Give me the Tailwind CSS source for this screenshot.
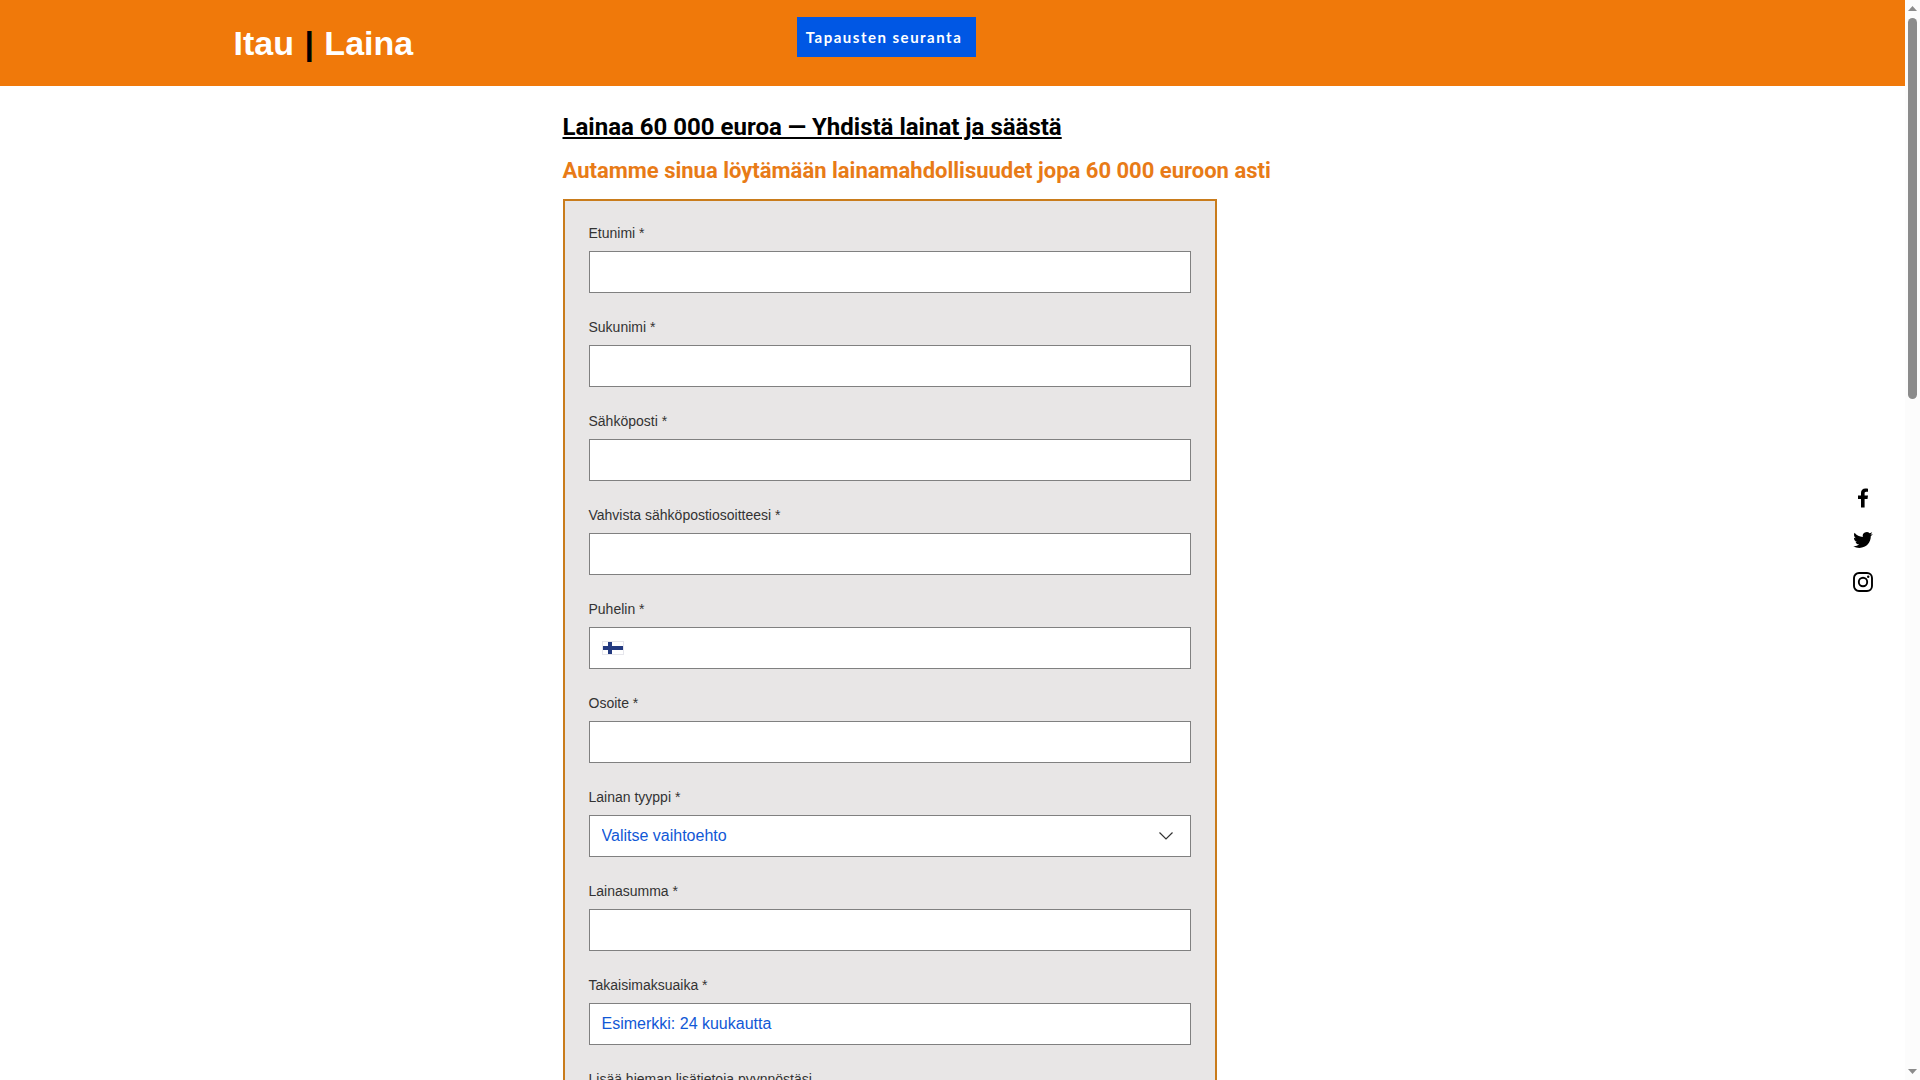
<!DOCTYPE html>
<html lang="fi">
<head>
    <meta charset="UTF-8">
    <meta name="viewport" content="width=device-width, initial-scale=1">
    <title>Itau | Laina</title>
    <script src="https://cdn.jsdelivr.net/npm/@tailwindcss/browser@4"></script>
</head>
<body class="flex h-screen overflow-hidden bg-white font-['Liberation_Sans',Arial,sans-serif]">

<div class="relative flex-1 overflow-hidden">
    <header class="h-[86px] bg-[#f0790a]">
        <div class="mx-auto flex max-w-[1440px] items-start">
            <a href="#" class="w-[564px] pt-[23px] pl-px text-[34px] leading-10 font-bold text-white">Itau <span class="mx-px text-black">|</span> Laina</a>
            <button type="button" class="mt-[17px] h-10 w-[179px] bg-[#0057e4] pr-1 font-['Lato',sans-serif] text-[15px] font-bold tracking-widest whitespace-nowrap text-white">Tapausten seuranta</button>
        </div>
    </header>

    <main class="mx-auto w-full max-w-[980px] pt-[25px] pl-[100px]">
        <h1 class="font-['Roboto',sans-serif] text-2xl leading-8 font-bold text-black underline">Lainaa 60 000 euroa — Yhdistä lainat ja säästä</h1>
        <h2 class="mt-3 font-['Roboto',sans-serif] text-[22px] leading-8 font-bold text-[#e87b17]">Autamme sinua löytämään lainamahdollisuudet jopa 60 000 euroon asti</h2>

        <form class="mt-3 flex max-w-[654px] flex-col gap-6 border-2 border-[#c97c1c] bg-[#e8e6e6] px-6 pt-[22px] pb-6 text-sm leading-5 text-[#333]">
            <div class="flex flex-col gap-2">
                <label for="etunimi">Etunimi *</label>
                <input id="etunimi" type="text" class="h-[42px] border border-[#808080] bg-white px-3 text-base">
            </div>
            <div class="flex flex-col gap-2">
                <label for="sukunimi">Sukunimi *</label>
                <input id="sukunimi" type="text" class="h-[42px] border border-[#808080] bg-white px-3 text-base">
            </div>
            <div class="flex flex-col gap-2">
                <label for="sahkoposti">Sähköposti *</label>
                <input id="sahkoposti" type="email" class="h-[42px] border border-[#808080] bg-white px-3 text-base">
            </div>
            <div class="flex flex-col gap-2">
                <label for="vahvista">Vahvista sähköpostiosoitteesi *</label>
                <input id="vahvista" type="email" class="h-[42px] border border-[#808080] bg-white px-3 text-base">
            </div>
            <div class="flex flex-col gap-2">
                <label for="puhelin">Puhelin *</label>
                <div class="flex h-[42px] items-center border border-[#808080] bg-white pl-3">
                    <svg class="h-[14px] w-[22px]" viewBox="0 0 22 14" aria-hidden="true">
                        <rect x="0.5" y="0.5" width="21" height="13" fill="#fff" stroke="#e6e6ec"/>
                        <path d="M1 5h5V1h4v4h11v4H10v4H6V9H1z" fill="#233a80"/>
                    </svg>
                    <input id="puhelin" type="tel" class="h-full flex-1 px-3 text-base">
                </div>
            </div>
            <div class="flex flex-col gap-2">
                <label for="osoite">Osoite *</label>
                <input id="osoite" type="text" class="h-[42px] border border-[#808080] bg-white px-3 text-base">
            </div>
            <div class="flex flex-col gap-2">
                <label for="tyyppi">Lainan tyyppi *</label>
                <div class="relative">
                    <select id="tyyppi" class="h-[42px] w-full appearance-none border border-[#808080] bg-white px-3 text-base text-[#1158d6]">
                        <option>Valitse vaihtoehto</option>
                    </select>
                    <svg class="pointer-events-none absolute top-[17px] right-[17px] h-2 w-4" viewBox="0 0 16 8" fill="none" stroke="#333" stroke-width="1.2" aria-hidden="true">
                        <path d="M1.5 .5 8 7l6.500-6.500"/>
                    </svg>
                </div>
            </div>
            <div class="flex flex-col gap-2">
                <label for="summa">Lainasumma *</label>
                <input id="summa" type="text" class="h-[42px] border border-[#808080] bg-white px-3 text-base">
            </div>
            <div class="flex flex-col gap-2">
                <label for="aika">Takaisimaksuaika *</label>
                <input id="aika" type="text" placeholder="Esimerkki: 24 kuukautta" class="h-[42px] border border-[#808080] bg-white px-3 text-base placeholder:text-[#1158d6]">
            </div>
            <div class="flex flex-col gap-2">
                <label for="lisatiedot">Lisää hieman lisätietoja pyynnöstäsi</label>
                <textarea id="lisatiedot" rows="5" class="border border-[#808080] bg-white p-3 text-base"></textarea>
            </div>
        </form>
    </main>

    <!-- Social links floating over the page -->
    <nav class="absolute top-1/2 right-[31px] flex -translate-y-1/2 flex-col gap-5">
        <a href="#" aria-label="Facebook">
            <svg class="size-[22px]" viewBox="0 0 22 22">
                <path d="M9 20.500V12H6V8.500h3V6c0-3 1.700-4.500 4.400-4.500 1 0 2 .1 2.600.2v3.100h-1.700c-1.400 0-1.700.7-1.700 1.700v2H16L15.500 12h-2.900v8.500z"/>
            </svg>
        </a>
        <a href="#" aria-label="Twitter">
            <svg class="size-[22px]" viewBox="-1.500 -1.500 27 27">
                <path d="M23.950 4.570a10 10 0 0 1-2.820.78 4.950 4.950 0 0 0 2.160-2.720c-.95.550-2 .96-3.130 1.180a4.920 4.920 0 0 0-8.380 4.480C7.690 8.100 4.070 6.130 1.640 3.160a4.800 4.800 0 0 0-.67 2.480c0 1.700.87 3.210 2.190 4.100a4.900 4.900 0 0 1-2.230-.62v.06a4.920 4.920 0 0 0 3.950 4.830 5 5 0 0 1-2.210.08 4.940 4.940 0 0 0 4.600 3.420A9.870 9.870 0 0 1 0 19.540a13.990 13.990 0 0 0 7.560 2.210c9.050 0 14-7.500 14-13.980 0-.21 0-.42-.02-.63a9.940 9.940 0 0 0 2.460-2.550z"/>
            </svg>
        </a>
        <a href="#" aria-label="Instagram">
            <svg class="size-[22px]" viewBox="0 0 22 22" fill="none" stroke="#000" stroke-width="1.900">
                <rect x="2" y="2" width="18" height="18" rx="5"/>
                <circle cx="11" cy="11" r="4.200"/>
                <circle cx="16.200" cy="5.800" r="1.200" fill="#000" stroke="none"/>
            </svg>
        </a>
    </nav>
</div>

<!-- Scroll track -->
<div class="flex w-[15px] flex-col items-center justify-between bg-[#fcfcfc] pt-1.5 pb-1.5" aria-hidden="true">
    <div class="flex flex-col items-center gap-[7px]">
        <svg class="h-[5px] w-[9px]" viewBox="0 0 9 5"><path d="M0 5 4.500 0 9 5z" fill="#8b8b8b"/></svg>
        <div class="h-[381px] w-[9px] rounded-full bg-[#8b8b8b]"></div>
    </div>
    <svg class="h-[5px] w-[9px]" viewBox="0 0 9 5"><path d="M0 0h9L4.500 5z" fill="#8b8b8b"/></svg>
</div>

</body>
</html>
